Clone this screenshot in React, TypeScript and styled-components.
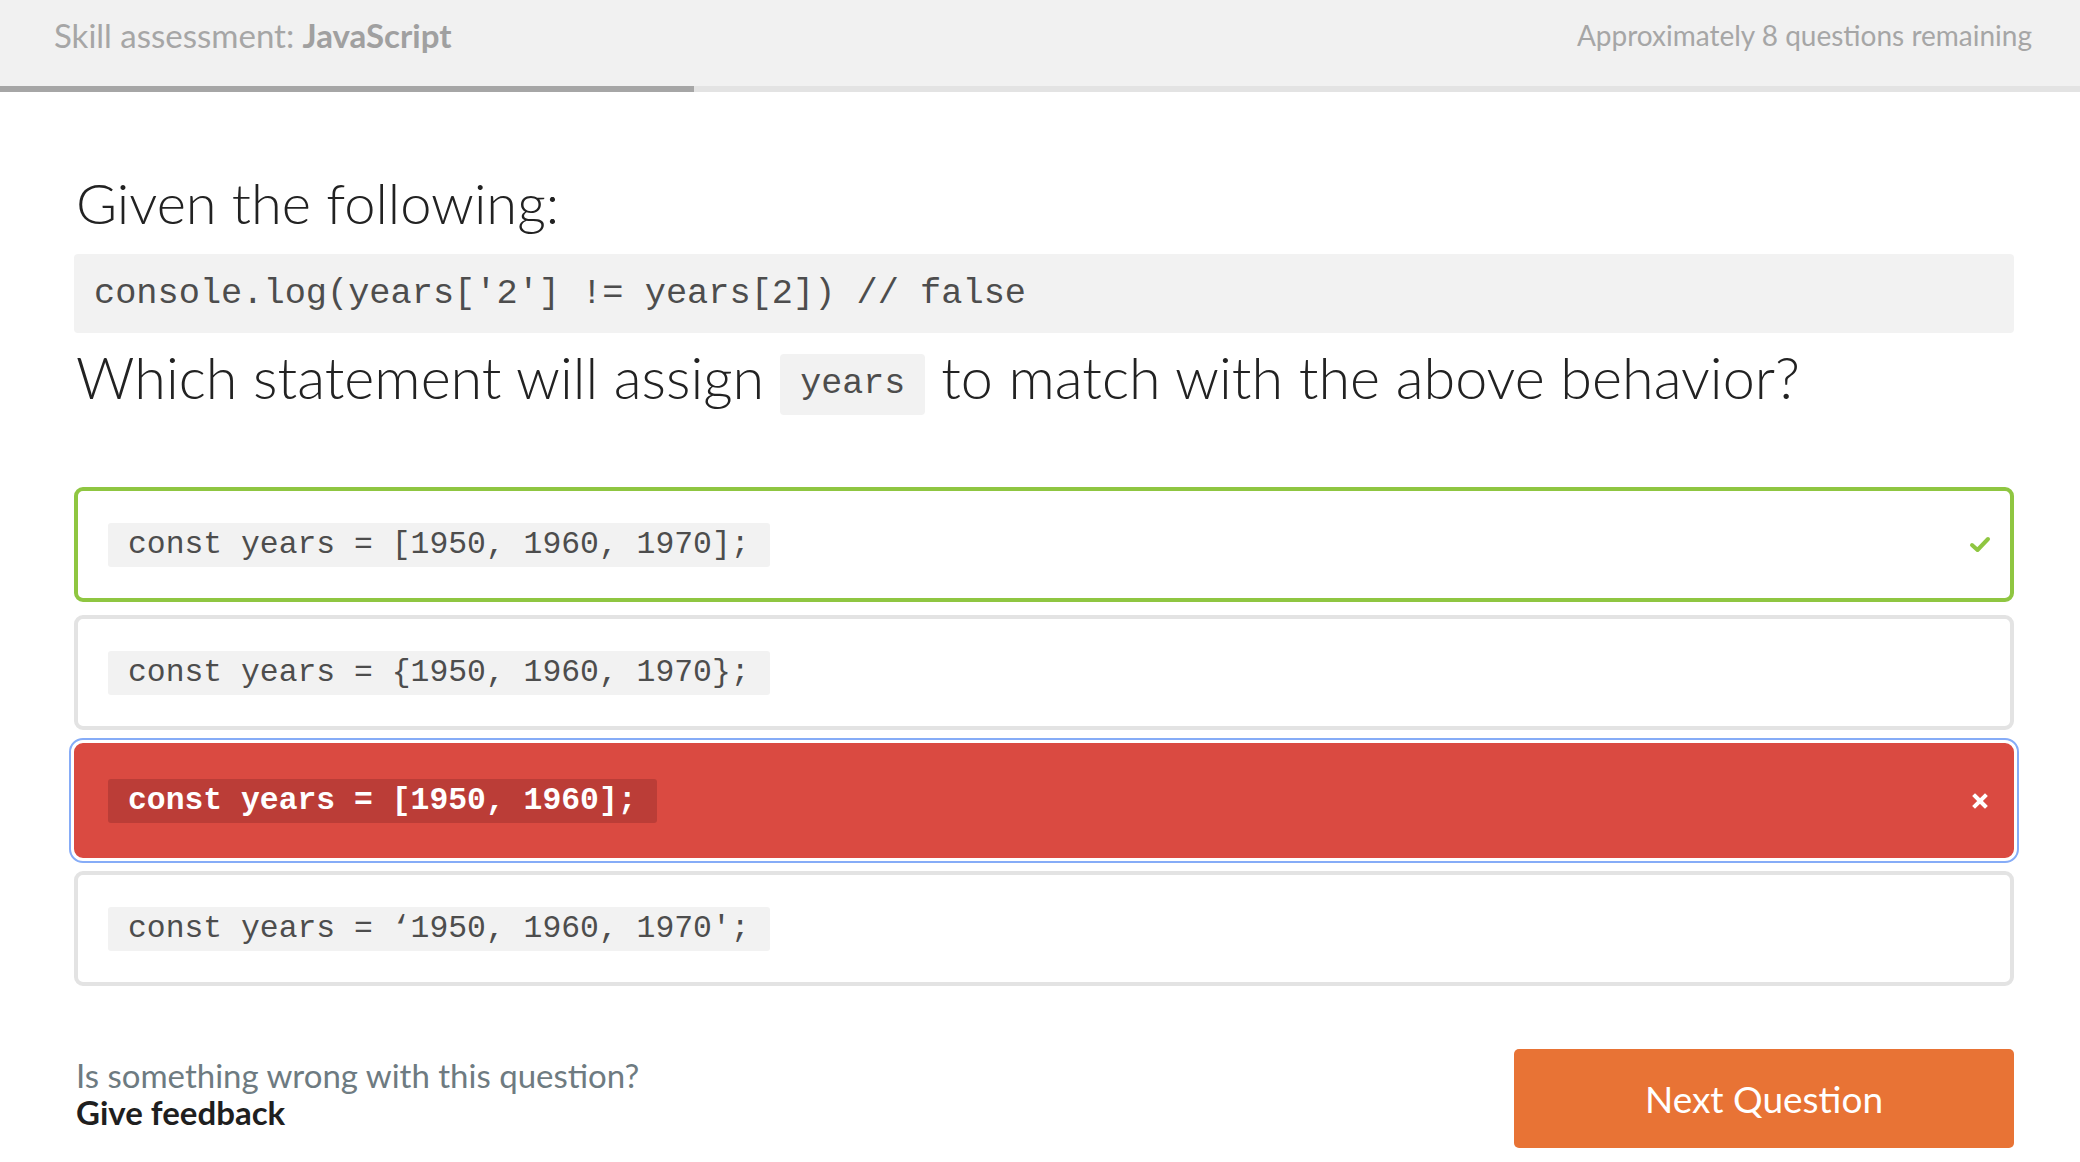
import React from "react";
import styled, { createGlobalStyle } from "styled-components";

const Global = createGlobalStyle`
  html, body { margin: 0; padding: 0; background: #ffffff; }
  body { font-family: Lato, "Open Sans", sans-serif; }
  * { box-sizing: border-box; }
`;

const Header = styled.header`
  height: 86px;
  background: #f1f1f1;
  display: flex;
  align-items: center;
  justify-content: space-between;
  padding: 0 48px 16px 54px;
  color: #a6a6a6;
`;

const Crumb = styled.span`
  font-size: 33px;
`;

const Remaining = styled.span`
  font-size: 28px;
`;

const Strong = styled.strong`
  font-weight: 700;
  color: #a0a0a0;
`;

const Track = styled.div`
  height: 6px;
  background: #e3e3e3;
`;

const Fill = styled.div`
  height: 100%;
  background: #a6a6a6;
`;

const Main = styled.main`
  padding: 0 66px 0 74px;
`;

const Title = styled.h1`
  margin: 0;
  padding: 59px 0 0 2px;
  font-size: 56px;
  line-height: 103px;
  font-weight: 300;
  color: #222222;
`;

const CodeBlock = styled.pre`
  margin: 0;
  height: 79px;
  display: flex;
  align-items: center;
  padding: 0 20px;
  background: #f2f2f2;
  border-radius: 4px;
  font-family: "Liberation Mono", "Courier New", monospace;
  font-size: 35.3px;
  color: #4d4d4d;
`;

const Question = styled.h2`
  margin: 0;
  padding: 12px 0 0 2px;
  font-size: 57.5px;
  line-height: 64px;
  font-weight: 300;
  color: #222222;
`;

const InlineCode = styled.code`
  display: inline-block;
  vertical-align: middle;
  margin: 0 16px;
  padding: 10px 20px 11px;
  background: #f2f2f2;
  border-radius: 4px;
  font-family: "Liberation Mono", "Courier New", monospace;
  font-size: 35px;
  line-height: 40px;
  color: #4d4d4d;
`;

const Options = styled.div`
  margin-top: 72px;
  display: flex;
  flex-direction: column;
  gap: 13px;
`;

type Status = "correct" | "neutral" | "wrong";

const Option = styled.div<{ $status: Status }>`
  height: 115px;
  display: flex;
  align-items: center;
  justify-content: space-between;
  padding: 0 18px 0 30px;
  border-radius: 9px;
  border: 4px solid
    ${(p) =>
      p.$status === "correct" ? "#8fc641" : p.$status === "wrong" ? "#da4a41" : "#e3e3e3"};
  background: ${(p) => (p.$status === "wrong" ? "#da4a41" : "#ffffff")};
  ${(p) =>
    p.$status === "wrong" &&
    `outline: 2px solid #86acf7; outline-offset: 3px;`}
`;

const OptionCode = styled.code<{ $status: Status }>`
  display: inline-flex;
  align-items: center;
  height: 44px;
  padding: 0 20px;
  border-radius: 3px;
  font-family: "Liberation Mono", "Courier New", monospace;
  font-size: 31.4px;
  white-space: pre;
  background: ${(p) => (p.$status === "wrong" ? "#bb3d37" : "#f2f2f2")};
  color: ${(p) => (p.$status === "wrong" ? "#ffffff" : "#4d4d4d")};
  font-weight: ${(p) => (p.$status === "wrong" ? 700 : 400)};
`;

const IconSlot = styled.span`
  display: flex;
  width: 24px;
  justify-content: center;
`;

const Footer = styled.footer`
  margin-top: 63px;
  display: flex;
  align-items: center;
  justify-content: space-between;
`;

const FeedbackText = styled.div`
  font-size: 33px;
  line-height: 37px;
  padding: 0 0 10px 2px;
`;

const Muted = styled.div`
  color: #6e7b81;
`;

const FeedbackLink = styled.div`
  color: #1f1f1f;
  font-weight: 700;
`;

const NextButton = styled.button`
  width: 500px;
  height: 99px;
  border: none;
  border-radius: 5px;
  background: #e87335;
  color: #ffffff;
  font-family: Lato, "Open Sans", sans-serif;
  font-size: 37px;
  cursor: pointer;
`;

const Check = () => (
  <svg width="22" height="18" viewBox="0 0 22 18">
    <polyline points="3,9 8.5,14 19,3" fill="none" stroke="#8fc641" strokeWidth="4" strokeLinecap="round" strokeLinejoin="round" />
  </svg>
);

const Cross = () => (
  <svg width="16" height="16" viewBox="0 0 16 16">
    <path d="M3 3 L13 13 M13 3 L3 13" stroke="#ffffff" strokeWidth="4" strokeLinecap="square" />
  </svg>
);

const options: { code: string; status: Status }[] = [
  { code: "const years = [1950, 1960, 1970];", status: "correct" },
  { code: "const years = {1950, 1960, 1970};", status: "neutral" },
  { code: "const years = [1950, 1960];", status: "wrong" },
  { code: "const years = \u20181950, 1960, 1970\u2032;", status: "neutral" },
];

export default function App() {
  return (
    <>
      <Global />
      <Header>
        <Crumb>
          Skill assessment: <Strong>JavaScript</Strong>
        </Crumb>
        <Remaining>Approximately 8 questions remaining</Remaining>
      </Header>
      <Track>
        <Fill style={{ width: "694px" }} />
      </Track>
      <Main>
        <Title>Given the following:</Title>
        <CodeBlock>console.log(years['2'] != years[2]) // false</CodeBlock>
        <Question>
          Which statement will assign<InlineCode>years</InlineCode>to match with the above behavior?
        </Question>
        <Options>
          {options.map((o, i) => (
            <Option key={i} $status={o.status}>
              <OptionCode $status={o.status}>{o.code}</OptionCode>
              <IconSlot>
                {o.status === "correct" && <Check />}
                {o.status === "wrong" && <Cross />}
              </IconSlot>
            </Option>
          ))}
        </Options>
        <Footer>
          <FeedbackText>
            <Muted>Is something wrong with this question?</Muted>
            <FeedbackLink>Give feedback</FeedbackLink>
          </FeedbackText>
          <NextButton>Next Question</NextButton>
        </Footer>
      </Main>
    </>
  );
}
